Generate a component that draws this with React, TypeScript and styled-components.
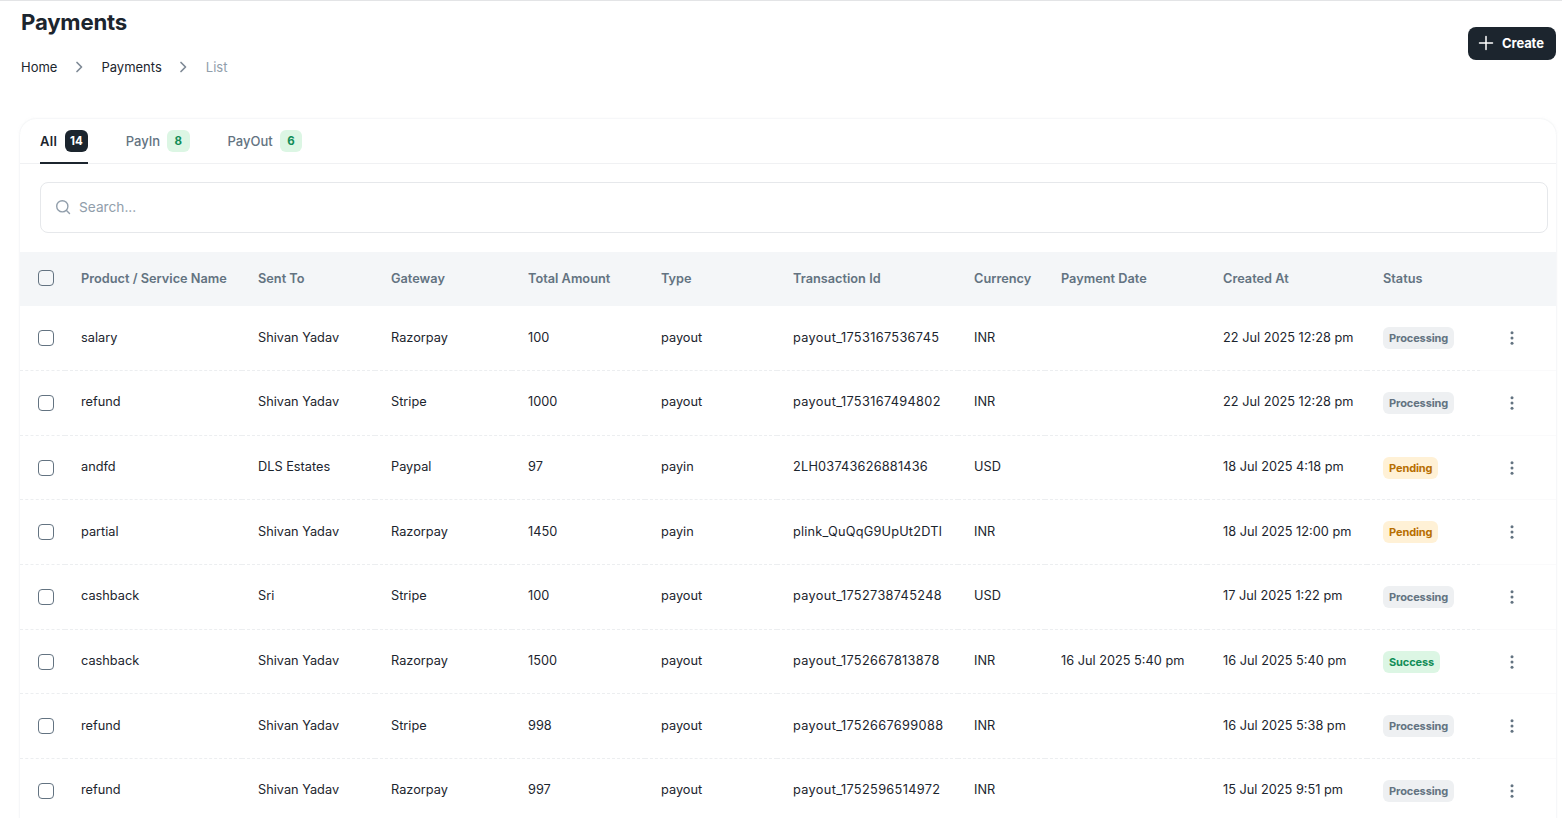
import React from "react";
import styled, { createGlobalStyle } from "styled-components";

const Global = createGlobalStyle`
  html, body { margin: 0; padding: 0; height: 100%; overflow: hidden; background: #fff; }
  body { font-family: "Inter", "Noto Sans", sans-serif; color: #1c252e; }
  * { box-sizing: border-box; }
`;

const Page = styled.div`
  height: 818px;
  overflow: hidden;
  border-top: 1px solid #e3e4e6;
  padding: 0 6px 0 20px;
`;
const Header = styled.header`
  display: flex;
  justify-content: space-between;
  align-items: flex-start;
  height: 118px;
`;
const HeadLeft = styled.div`
  padding-left: 1px;
`;
const Title = styled.h1`
  margin: 5px 0 0;
  font-size: 22.2px;
  line-height: 32px;
  font-weight: 650;
  letter-spacing: -0.2px;
  color: #1c252e;
`;
const Crumbs = styled.nav`
  display: flex;
  align-items: center;
  margin-top: 18px;
  height: 22px;
  font-size: 13px;
`;
const Crumb = styled.span<{ $muted?: boolean }>`
  color: ${(p) => (p.$muted ? "#919eab" : "#1c252e")};
`;
const Chevron = styled.svg`
  width: 16px;
  height: 16px;
  margin: 0 14.5px 0 13.5px;
  color: #7f8a96;
`;
const CreateBtn = styled.button`
  display: flex;
  align-items: center;
  gap: 7px;
  margin-top: 26px;
  width: 88px;
  height: 33px;
  padding: 0 0 1px 9px;
  border: 0;
  border-radius: 8px;
  background: #1c252e;
  color: #fff;
  font: 700 13px "Inter", sans-serif;
  letter-spacing: -0.1px;
`;
const Card = styled.section`
  border-radius: 16px 16px 0 0;
  box-shadow: 0 0 2px rgba(145, 158, 171, 0.2), 0 0 4px rgba(145, 158, 171, 0.06);
`;
const Tabs = styled.div`
  display: flex;
  gap: 38px;
  height: 45px;
  padding-left: 20px;
  border-bottom: 1px solid #f0f1f3;
`;
const Tab = styled.div<{ $active?: boolean }>`
  display: flex;
  align-items: center;
  gap: ${(p) => (p.$active ? "8px" : "7px")};
  height: 45px;
  font-size: 13px;
  font-weight: ${(p) => (p.$active ? 600 : 500)};
  letter-spacing: ${(p) => (p.$active ? "0.3px" : "0")};
  color: ${(p) => (p.$active ? "#1c252e" : "#637381")};
  border-bottom: 2px solid ${(p) => (p.$active ? "#1c252e" : "transparent")};
`;
const Count = styled.span<{ $active?: boolean }>`
  display: flex;
  align-items: center;
  justify-content: center;
  min-width: 22.5px;
  height: 22px;
  border-radius: 6px;
  font-size: 11.5px;
  font-weight: 700;
  letter-spacing: 0;
  background: ${(p) => (p.$active ? "#1c252e" : "#dcf6e4")};
  color: ${(p) => (p.$active ? "#fff" : "#118d57")};
`;
const SearchWrap = styled.div`
  padding: 18px 8px 19px 20px;
`;
const SearchBox = styled.div`
  display: flex;
  align-items: center;
  gap: 8px;
  height: 51px;
  padding: 0 0 1px 14px;
  border: 1px solid #e6e8eb;
  border-radius: 8px;
  color: #919eab;
  font-size: 13.7px;
`;
const Table = styled.table`
  width: 100%;
  table-layout: fixed;
  border-collapse: collapse;
  font-size: 12.75px;
`;
const HeadRow = styled.tr`
  height: 54px;
  background: #f4f6f8;
`;
const Th = styled.th`
  padding: 0 16px 2px;
  text-align: left;
  font-weight: 600;
  font-size: 12.75px;
  color: #637381;
  white-space: nowrap;
`;
const BodyRow = styled.tr`
  height: 64.65px;
`;
const Td = styled.td<{ $spacing?: number }>`
  padding: 0 16px 2px;
  color: #1c252e;
  white-space: nowrap;
  overflow: hidden;
  letter-spacing: ${(p) => p.$spacing ?? 0}px;
  border-bottom: 1px dashed #eceef0;
`;
const CheckCell = styled.td`
  padding: 0 0 0 18px;
  border-bottom: 1px dashed #eceef0;
`;
const CheckHead = styled.th`
  padding: 0 0 2px 18px;
`;
const Check = styled.span`
  display: block;
  width: 16px;
  height: 16px;
  border: 1.5px solid #637381;
  border-radius: 4px;
`;
const ActionCell = styled.td`
  padding: 0 12px 0 0;
  text-align: center;
  border-bottom: 1px solid #fafafb;
`;
const Dots = styled.svg`
  display: block;
  width: 20px;
  height: 20px;
  margin: 0 auto;
  color: #637381;
`;
const badgeColors = {
  Processing: ["#eef0f2", "#637381"],
  Pending: ["#fff1d6", "#b76e00"],
  Success: ["#dcf6e4", "#118d57"],
} as const;
const Badge = styled.span<{ $s: keyof typeof badgeColors }>`
  display: inline-flex;
  align-items: center;
  height: 22px;
  margin-top: 2px;
  padding: 0 6px;
  border-radius: 6px;
  font-size: 11px;
  font-weight: 700;
  letter-spacing: -0.1px;
  background: ${(p) => badgeColors[p.$s][0]};
  color: ${(p) => badgeColors[p.$s][1]};
`;

const widths = [45, 177, 133, 137, 133, 132, 181, 87, 162, 160, 113, 76];
const heads = ["Product / Service Name", "Sent To", "Gateway", "Total Amount", "Type", "Transaction Id", "Currency", "Payment Date", "Created At", "Status"];
type Row = [string, string, string, string, string, string, string, string, string, keyof typeof badgeColors];
const rows: Row[] = [
  ["salary", "Shivan Yadav", "Razorpay", "100", "payout", "payout_1753167536745", "INR", "", "22 Jul 2025 12:28 pm", "Processing"],
  ["refund", "Shivan Yadav", "Stripe", "1000", "payout", "payout_1753167494802", "INR", "", "22 Jul 2025 12:28 pm", "Processing"],
  ["andfd", "DLS Estates", "Paypal", "97", "payin", "2LH03743626881436", "USD", "", "18 Jul 2025 4:18 pm", "Pending"],
  ["partial", "Shivan Yadav", "Razorpay", "1450", "payin", "plink_QuQqG9UpUt2DTl", "INR", "", "18 Jul 2025 12:00 pm", "Pending"],
  ["cashback", "Sri", "Stripe", "100", "payout", "payout_1752738745248", "USD", "", "17 Jul 2025 1:22 pm", "Processing"],
  ["cashback", "Shivan Yadav", "Razorpay", "1500", "payout", "payout_1752667813878", "INR", "16 Jul 2025 5:40 pm", "16 Jul 2025 5:40 pm", "Success"],
  ["refund", "Shivan Yadav", "Stripe", "998", "payout", "payout_1752667699088", "INR", "", "16 Jul 2025 5:38 pm", "Processing"],
  ["refund", "Shivan Yadav", "Razorpay", "997", "payout", "payout_1752596514972", "INR", "", "15 Jul 2025 9:51 pm", "Processing"],
];

const ChevronIcon = () => (
  <Chevron viewBox="0 0 16 16" fill="none" stroke="currentColor" strokeWidth="1.7" strokeLinecap="round" strokeLinejoin="round">
    <path d="M6 3.5 10.5 8 6 12.5" />
  </Chevron>
);

export default function App() {
  return (
    <Page>
      <Global />
      <Header>
        <HeadLeft>
          <Title>Payments</Title>
          <Crumbs>
            <Crumb>Home</Crumb>
            <ChevronIcon />
            <Crumb>Payments</Crumb>
            <ChevronIcon />
            <Crumb $muted>List</Crumb>
          </Crumbs>
        </HeadLeft>
        <CreateBtn>
          <svg width="18" height="18" viewBox="0 0 18 18" fill="none" stroke="currentColor" strokeWidth="1.5" strokeLinecap="round">
            <path d="M9 2.5v13M2.5 9h13" />
          </svg>
          Create
        </CreateBtn>
      </Header>
      <Card>
        <Tabs>
          <Tab $active>All <Count $active>14</Count></Tab>
          <Tab>PayIn <Count>8</Count></Tab>
          <Tab>PayOut <Count>6</Count></Tab>
        </Tabs>
        <SearchWrap>
          <SearchBox>
            <svg width="16" height="16" viewBox="0 0 16 16" fill="none" stroke="#919eab" strokeWidth="1.4" strokeLinecap="round">
              <circle cx="7.3" cy="7.3" r="5.6" />
              <path d="m11.5 11.5 3 3" />
            </svg>
            Search...
          </SearchBox>
        </SearchWrap>
        <Table>
          <colgroup>
            {widths.map((w, i) => (
              <col key={i} style={{ width: w }} />
            ))}
          </colgroup>
          <thead>
            <HeadRow>
              <CheckHead><Check /></CheckHead>
              {heads.map((h) => <Th key={h}>{h}</Th>)}
              <Th />
            </HeadRow>
          </thead>
          <tbody>
            {rows.map((r, i) => (
              <BodyRow key={i}>
                <CheckCell><Check /></CheckCell>
                {r.slice(0, 9).map((c, j) => (
                  <Td key={j} $spacing={j === 5 ? (c.startsWith("payout") ? 0.33 : 0.2) : 0}>{c}</Td>
                ))}
                <Td><Badge $s={r[9]}>{r[9]}</Badge></Td>
                <ActionCell>
                  <Dots viewBox="0 0 20 20" fill="currentColor">
                    <circle cx="10" cy="4.8" r="1.5" />
                    <circle cx="10" cy="10" r="1.5" />
                    <circle cx="10" cy="15.2" r="1.5" />
                  </Dots>
                </ActionCell>
              </BodyRow>
            ))}
          </tbody>
        </Table>
      </Card>
    </Page>
  );
}
